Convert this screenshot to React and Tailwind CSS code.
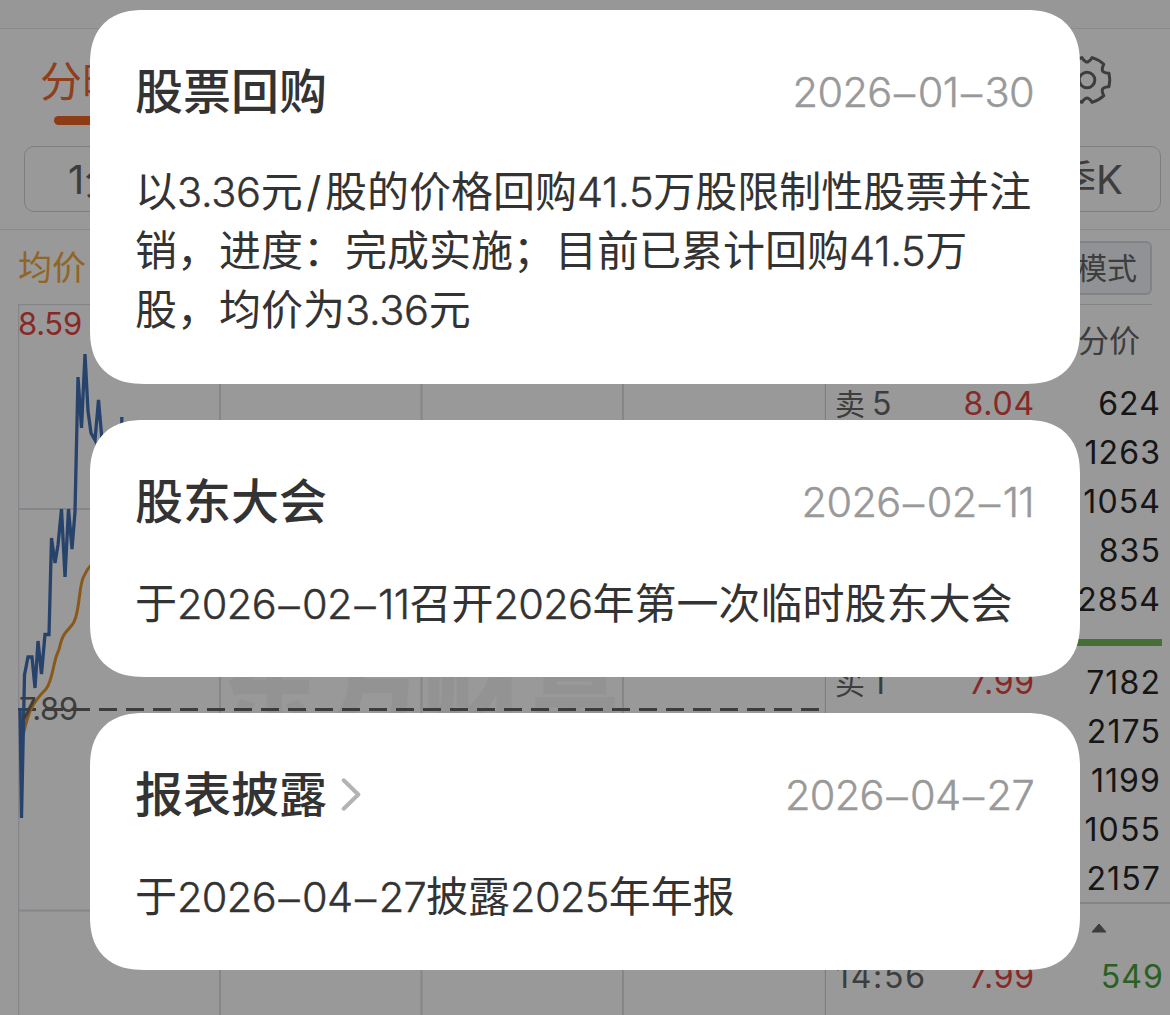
import React from "react";

const INK = "font-['Inter','Noto_Sans_CJK_SC',sans-serif]";

/* Latin digits sit slightly tighter than the Chinese text around them; dashes are wide and low. */
function Digits({ children, tracking = "tracking-[-0.65px]" }) {
  const parts = String(children).split("–");
  return (
    <span className={`text-[41.5px] font-light [-webkit-text-stroke:0.45px_currentColor] ${tracking}`}>
      {parts.map((part, i) => (
        <React.Fragment key={i}>
          {i > 0 && (
            <span className="font-['Liberation_Sans'] text-[38px] leading-none tracking-normal mx-[2.5px] align-[1.5px]">–</span>
          )}
          {part}
        </React.Fragment>
      ))}
    </span>
  );
}

function Decimal({ children }) {
  return <Digits tracking="tracking-[-0.3px]">{children}</Digits>;
}

function gearPath() {
  const at = (r, deg) => {
    const a = (deg * Math.PI) / 180;
    return `${(27 + r * Math.cos(a)).toFixed(2)} ${(27 + r * Math.sin(a)).toFixed(2)}`;
  };
  let d = `M${at(23, -17)}`;
  for (let k = 0; k < 6; k++) {
    const a = k * 60;
    d += ` Q${at(23.6, a)} ${at(23, a + 17)} Q${at(19.5, a + 20)} ${at(18.4, a + 26)} Q${at(17.6, a + 30)} ${at(18.4, a + 34)} Q${at(19.5, a + 40)} ${at(23, a + 43)}`;
  }
  return d + "Z";
}

function Gear() {
  return (
    <svg width="54" height="54" viewBox="0 0 54 54" fill="none" stroke="#666" strokeWidth="3" strokeLinejoin="round">
      <path d={gearPath()} />
      <circle cx="27" cy="27" r="7.8" />
    </svg>
  );
}

function PriceChart() {
  return (
    <div className="relative w-[808px] h-[711px] shrink-0">
      <div className="absolute left-[200px] top-[334px] text-[102px] leading-[102px] font-black text-[#f6f6f6] whitespace-nowrap">
        东方财富
      </div>
      <svg className="absolute inset-0" width="808" height="711" viewBox="18 304 808 711" fill="none">
        <g stroke="#e0e0e6" strokeWidth="2">
          <path d="M18 304.5H826M18.5 304V1015" strokeWidth="1.5" />
          <path d="M18 509H826M18 910.5H826M220 304V1015M421.5 304V1015M623 304V1015" />
          <path d="M825.5 304V1015" strokeWidth="1.3" stroke="#d2d2d2" />
        </g>
        <path d="M18 709.5H826" stroke="#646464" strokeWidth="3" strokeDasharray="18 9" />
        <path
          d="M20 712L21.5 740C24 733 26 720 31 709C36 699 42 693 46 689C53 680 53 662 58 652C61 645 60 639 66 632C71 626 75 624 77 612C80 598 80 582 84 576C86 571 88 568 92 564"
          stroke="#e5942e"
          strokeWidth="3"
        />
        <path
          d="M20 708L21.5 818L24.5 675L28 657H32L35 688L38 641L41.5 674L45 634.5H49L51.5 538L55 563L58 545L61.5 509L65 577L68.5 509L72 549L75 512L78 377L81.5 428L85 354L88 411L91 433L95 440L98.5 400L102 440M121.8 417V424"
          stroke="#4170b5"
          strokeWidth="3.3"
        />
      </svg>
      <span className="absolute left-0 top-[2px] text-[31px] leading-[36px] text-[#e2453f] tracking-[-0.3px]">8.59</span>
      <span className="absolute left-[1px] top-[387px] text-[31px] leading-[36px] text-[#666] tracking-[-0.4px]">7.89</span>
    </div>
  );
}

function QuoteRow({ side, level, time, price = "", volume, green }) {
  return (
    <div className="flex h-[49.2px] items-center text-[32px] leading-none">
      <span className="w-[100px] text-[#666] whitespace-nowrap">
        {side && (
          <span className="inline-flex items-center gap-[7px]">
            <span className="text-[30px]">{side}</span>
            <span>{level}</span>
          </span>
        )}
        {time && <span className="tracking-[1.7px] pl-px">{time}</span>}
      </span>
      <span className="w-[100px] text-right text-[#e2453f] tracking-[0.8px]">{price}</span>
      <span className={`flex-1 text-right tracking-[1.1px] ${green ? "text-[#46a038]" : "text-[#262626]"}`}>{volume}</span>
    </div>
  );
}

function QuotePanel() {
  return (
    <div className="flex-1 flex flex-col">
      <div className="h-[73px] mr-[18px] border-t-[1.5px] border-[#dcdce2] flex items-center justify-end pr-[12px] text-[31px] text-[#666]">
        分价
      </div>
      <div className="pl-[9px] pr-[9px] pt-[2px]">
        <QuoteRow side="卖" level="5" price="8.04" volume="624" />
        <QuoteRow volume="1263" />
        <QuoteRow volume="1054" />
        <QuoteRow volume="835" />
        <QuoteRow volume="2854" />
      </div>
      <div className="h-[7px] ml-[9px] mr-[8px] mt-[14px] bg-[#73b957]" />
      <div className="pl-[9px] pr-[9px] mt-[12px]">
        <QuoteRow side="买" level="1" price="7.99" volume="7182" />
        <QuoteRow volume="2175" />
        <QuoteRow volume="1199" />
        <QuoteRow volume="1055" />
        <QuoteRow volume="2157" />
      </div>
      <div className="border-t-2 border-[#dcdce2] h-[50px] -mt-[1.5px] flex items-center justify-center pl-[201px]">
        <svg width="16" height="10" viewBox="0 0 16 10" fill="#666">
          <path d="M8 1L15 9H1Z" stroke="#666" strokeLinejoin="round" />
        </svg>
      </div>
      <div className="pl-[9px] pr-[6px]">
        <QuoteRow time="14:56" price="7.99" volume="549" green />
      </div>
    </div>
  );
}

function MarketPage() {
  return (
    <div className="h-full flex flex-col bg-white">
      <div className="h-[29px] shrink-0 bg-[#fcfcfc] border-b border-[#e6e6e6]" />
      <div className="h-[117px] shrink-0 flex justify-between pl-[40px] pr-[56px]">
        <div className="flex flex-col items-center pt-[30px]">
          <span className="text-[42px] leading-[42px] h-[57px] pt-[2px] text-[#f06a30]">分时</span>
          <span className="w-[56px] h-[9px] rounded-full bg-[#ec6423]" />
        </div>
        <div className="pt-[24px]">
          <Gear />
        </div>
      </div>
      <div className="h-[84px] shrink-0 flex justify-between items-start pl-[24px] pr-[9px] border-b border-[#e6e6e6]">
        <div className="w-[152px] h-[66px] rounded-[10px] border-[1.5px] border-[#d2d2d4] flex items-center pl-[43px] pt-px text-[40px] text-[#666]">1分</div>
        <div className="w-[152px] h-[66px] rounded-[10px] border-[1.5px] border-[#d2d2d4] flex items-center justify-end pr-[37px] pt-px text-[40px] text-[#666]">季K</div>
      </div>
      <div className="h-[74px] shrink-0 flex justify-between items-center pl-[18px] pr-[18px] pt-[2px]">
        <span className="text-[34px] leading-none text-[#f2a83c]">均价</span>
        <div className="w-[120px] h-[54px] rounded-md border-2 border-[#d8dae2] bg-[#f2f4f8] flex items-center justify-end pr-[13px] text-[30px] text-[#666]">模式</div>
      </div>
      <div className="flex flex-1 pl-[18px]">
        <PriceChart />
        <QuotePanel />
      </div>
    </div>
  );
}

function EventCard({ title, date, link, className, children }) {
  return (
    <section className={`bg-white rounded-[54px] [corner-shape:superellipse(1.25)] px-[45px] text-[#333] pt-[46px] ${className}`}>
      <header className="flex items-center justify-between h-[72px]">
        <h2 className="flex items-center text-[48px] leading-[72px] font-medium">
          {title}
          {link && (
            <svg className="ml-[14px] mb-[2px]" width="20" height="33" viewBox="0 0 20 33" fill="none" stroke="#b3b3b3" strokeWidth="4" strokeLinecap="round" strokeLinejoin="round">
              <path d="M2.7 2.3L17.3 16.5L2.7 30.7" />
            </svg>
          )}
        </h2>
        <time className="text-[42px] text-[#999] leading-[72px] mr-px">
          <Digits>{date}</Digits>
        </time>
      </header>
      {children}
    </section>
  );
}

export default function App() {
  return (
    <main className={`relative w-[1170px] h-[1015px] overflow-hidden ${INK}`}>
      <MarketPage />
      <div className="absolute inset-0 bg-black/40 flex flex-col gap-[36px] px-[90px] pt-[10px]">
        <EventCard title="股票回购" date="2026–01–30" className="h-[374px]">
          <p className="mt-[35px] text-[42px] leading-[58.8px] whitespace-nowrap">
            以<Decimal>3.36</Decimal>元<span className="px-[3.5px]">/</span>股的价格回购<Decimal>41.5</Decimal>万股限制性股票并注<br />
            销，进度：完成实施；目前已累计回购<Decimal>41.5</Decimal>万<br />
            股，均价为<Decimal>3.36</Decimal>元
          </p>
        </EventCard>
        <EventCard title="股东大会" date="2026–02–11" className="h-[257px]">
          <p className="mt-[36px] text-[42px] leading-[59px] whitespace-nowrap">
            于<Digits>2026–02–11</Digits>召开<Digits>2026</Digits>年第一次临时股东大会
          </p>
        </EventCard>
        <EventCard title="报表披露" date="2026–04–27" link className="h-[257px]">
          <p className="mt-[36px] text-[42px] leading-[59px] whitespace-nowrap">
            于<Digits>2026–04–27</Digits>披露<Digits>2025</Digits>年年报
          </p>
        </EventCard>
      </div>
    </main>
  );
}
